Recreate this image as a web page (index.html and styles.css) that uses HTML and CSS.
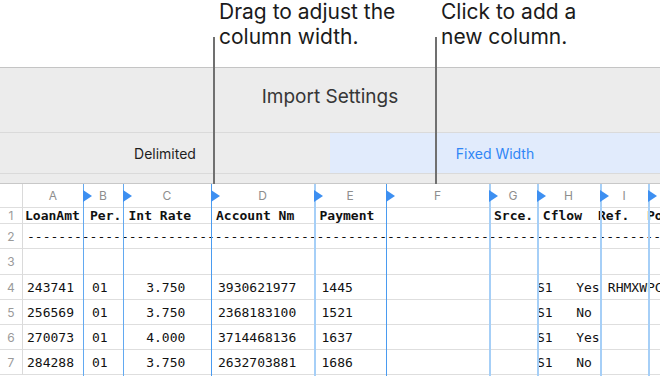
FILE: index.html
```html
<!DOCTYPE html>
<html lang="en">
<head>
<meta charset="utf-8">
<title>Import Settings</title>
<link rel="stylesheet" href="styles.css">
</head>
<body>
<div class="page">
  <div class="annotations">
    <p class="note note-drag"><span class="pointer"></span>Drag to adjust the<br>column width.</p>
    <p class="note note-add"><span class="pointer"></span>Click to add a<br>new column.</p>
  </div>
  <section class="panel">
    <h1 class="panel-title">Import Settings</h1>
    <div class="tabs">
      <div class="tab">Delimited</div>
      <div class="tab tab-active">Fixed Width</div>
    </div>
    <div class="sheet">
      <div class="row row-letters">
        <div class="cell rownum"></div>
        <div class="cell letter">A</div>
        <div class="cell letter guide">B</div>
        <div class="cell letter guide">C</div>
        <div class="cell letter guide guide-strong">D</div>
        <div class="cell letter guide guide-soft">E</div>
        <div class="cell letter guide guide-strong">F</div>
        <div class="cell letter guide guide-soft">G</div>
        <div class="cell letter guide guide-soft">H</div>
        <div class="cell letter guide guide-soft">I</div>
        <div class="cell letter guide guide-soft">J</div>
      </div>
      <div class="row row-head">
        <div class="cell rownum">1</div>
        <div class="cell ca">LoanAmt</div>
        <div class="cell cb">Per.</div>
        <div class="cell cc">Int Rate</div>
        <div class="cell cd">Account Nm</div>
        <div class="cell ce">Payment</div>
        <div class="cell cf"></div>
        <div class="cell cg">Srce.</div>
        <div class="cell ch"> Cflow</div>
        <div class="cell ci">Ref.</div>
        <div class="cell cj">Pool</div>
      </div>
      <div class="row">
        <div class="cell rownum">2</div>
        <div class="cell ca">-------------------------------------------------------------------------------------</div>
        <div class="cell cb"></div>
        <div class="cell cc"></div>
        <div class="cell cd"></div>
        <div class="cell ce"></div>
        <div class="cell cf"></div>
        <div class="cell cg"></div>
        <div class="cell ch"></div>
        <div class="cell ci"></div>
        <div class="cell cj"></div>
      </div>
      <div class="row">
        <div class="cell rownum">3</div>
        <div class="cell ca"></div>
        <div class="cell cb"></div>
        <div class="cell cc"></div>
        <div class="cell cd"></div>
        <div class="cell ce"></div>
        <div class="cell cf"></div>
        <div class="cell cg"></div>
        <div class="cell ch"></div>
        <div class="cell ci"></div>
        <div class="cell cj"></div>
      </div>
      <div class="row">
        <div class="cell rownum">4</div>
        <div class="cell ca">243741</div>
        <div class="cell cb">01</div>
        <div class="cell cc">  3.750</div>
        <div class="cell cd">3930621977</div>
        <div class="cell ce">1445</div>
        <div class="cell cf"></div>
        <div class="cell cg"></div>
        <div class="cell ch">S1   Yes</div>
        <div class="cell ci"> RHMXWPC</div>
        <div class="cell cj"></div>
      </div>
      <div class="row">
        <div class="cell rownum">5</div>
        <div class="cell ca">256569</div>
        <div class="cell cb">01</div>
        <div class="cell cc">  3.750</div>
        <div class="cell cd">2368183100</div>
        <div class="cell ce">1521</div>
        <div class="cell cf"></div>
        <div class="cell cg"></div>
        <div class="cell ch">S1   No</div>
        <div class="cell ci"></div>
        <div class="cell cj"></div>
      </div>
      <div class="row">
        <div class="cell rownum">6</div>
        <div class="cell ca">270073</div>
        <div class="cell cb">01</div>
        <div class="cell cc">  4.000</div>
        <div class="cell cd">3714468136</div>
        <div class="cell ce">1637</div>
        <div class="cell cf"></div>
        <div class="cell cg"></div>
        <div class="cell ch">S1   Yes</div>
        <div class="cell ci"></div>
        <div class="cell cj"></div>
      </div>
      <div class="row">
        <div class="cell rownum">7</div>
        <div class="cell ca">284288</div>
        <div class="cell cb">01</div>
        <div class="cell cc">  3.750</div>
        <div class="cell cd">2632703881</div>
        <div class="cell ce">1686</div>
        <div class="cell cf"></div>
        <div class="cell cg"></div>
        <div class="cell ch">S1   No</div>
        <div class="cell ci"></div>
        <div class="cell cj"></div>
      </div>
    </div>
  </section>
</div>
</body>
</html>
```

FILE: styles.css
```css
* { box-sizing: border-box; }

html, body { margin: 0; padding: 0; }

body {
  width: 660px;
  height: 376px;
  overflow: hidden;
  background: #ffffff;
  font-family: Inter, "Liberation Sans", sans-serif;
  color: #1b1b1b;
}

.annotations {
  display: flex;
  height: 67px;
  padding-left: 219px;
}

.note {
  position: relative;
  margin: 0;
  font-size: 21px;
  line-height: 24.5px;
  color: #1b1b1b;
}

.note-drag { width: 222px; }

.pointer {
  position: absolute;
  left: -6px;
  top: 37px;
  width: 2px;
  height: 147px;
  background: #707070;
  z-index: 3;
}

.panel {
  background: #ececec;
  border-top: 1px solid #c4c4c4;
}

.panel-title {
  margin: 0;
  height: 64px;
  padding-top: 18px;
  font-size: 19px;
  line-height: 22px;
  font-weight: 400;
  text-align: center;
  color: #363636;
}

.tabs {
  display: grid;
  grid-template-columns: 1fr 1fr;
  height: 42px;
  border-top: 1px solid #dadada;
  border-bottom: 1px solid #dadada;
  margin-bottom: 9px;
}

.tab {
  display: flex;
  align-items: center;
  justify-content: center;
  font-size: 14px;
  color: #1e1e1e;
}

.tab-active {
  background: #e1ebfc;
  color: #2f86f6;
}

.sheet {
  display: grid;
  grid-template-columns: 23px 60px 40px 88px 103px 72px 103px 48px 63px 48px 60px;
  grid-template-rows: 24px 16px 25px 26px 25px 25px 25px 25px;
  background: #ffffff;
  border-top: 1px solid #c8c8c8;
  font-family: "DejaVu Sans Mono", monospace;
  font-size: 13px;
  color: #111111;
}

.row { display: contents; }

.cell {
  display: flex;
  align-items: center;
  min-width: 0;
  white-space: pre;
  border-bottom: 1px solid #dedede;
}

.rownum {
  justify-content: center;
  border-right: 1px solid #dadada;
  font-family: Inter, "Liberation Sans", sans-serif;
  font-size: 12px;
  color: #9a9a9a;
}

.letter {
  position: relative;
  justify-content: center;
  font-family: Inter, "Liberation Sans", sans-serif;
  font-size: 12px;
  color: #8e8e8e;
}

.guide::after {
  content: "";
  position: absolute;
  left: 0;
  top: 0;
  width: 1px;
  height: 200px;
  background: #62a9f1;
  z-index: 1;
}

.guide-strong::after { background: #4a9bf0; }

.guide-soft::after {
  width: 2px;
  background: #a6cff7;
}

.guide::before {
  content: "";
  position: absolute;
  left: 0;
  top: 6px;
  width: 0;
  height: 0;
  border-left: 9px solid #3d8ff1;
  border-top: 6px solid transparent;
  border-bottom: 6px solid transparent;
  z-index: 2;
}

.row-head .cell:not(.rownum) {
  font-weight: bold;
  text-indent: -2px;
}

.ca { padding-left: 4px; }
.cb { padding-left: 9px; }
.cc { padding-left: 7.5px; }
.cd { padding-left: 7px; }
.ce { padding-left: 7.5px; }
.cg { padding-left: 7px; }
.ch { padding-left: 0; }
.ci { padding-left: 0; }
.cj { padding-left: 1px; }
```
